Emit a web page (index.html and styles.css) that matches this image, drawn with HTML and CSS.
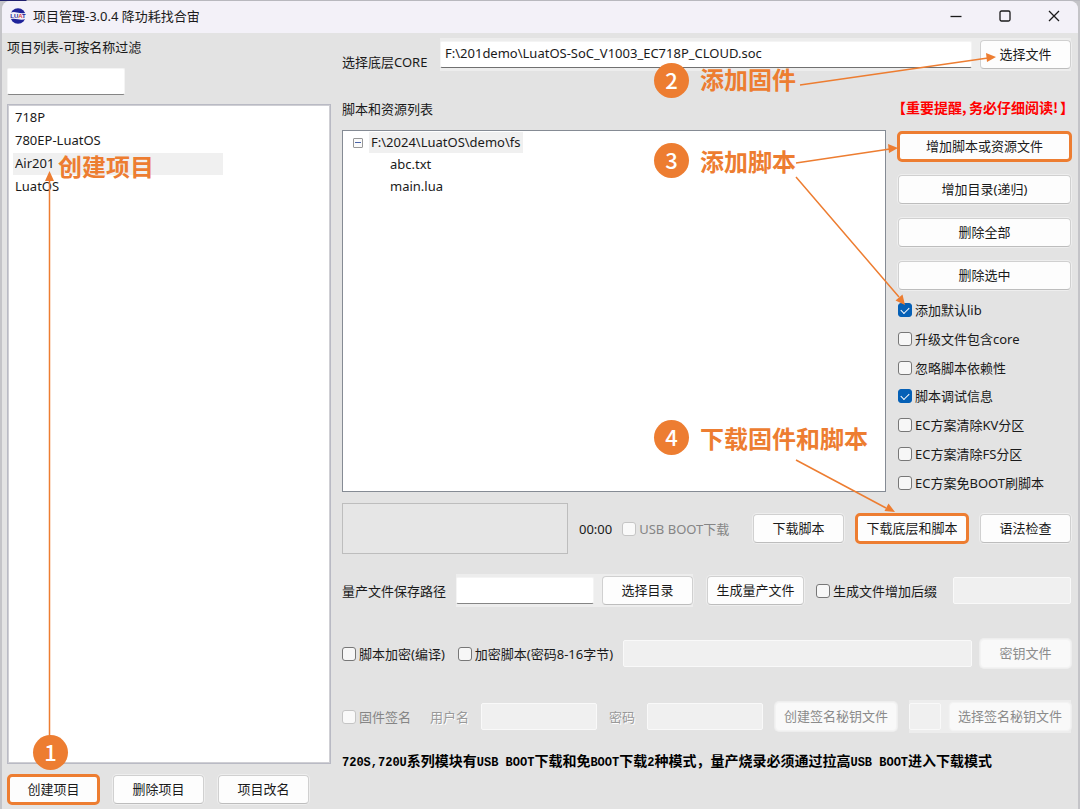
FILE: index.html
```html
<!DOCTYPE html>
<html lang="zh-CN">
<head>
<meta charset="utf-8">
<title>项目管理-3.0.4 降功耗找合宙</title>
<link rel="stylesheet" href="styles.css">
</head>
<body>
<div class="window">
  <header class="titlebar">
    <svg class="logo" viewBox="0 0 16 16" aria-hidden="true">
      <circle cx="8" cy="8" r="7.7" fill="#20249a"/>
      <path d="M0 5 Q3 3.5 7 4.5 T16 5 V11 Q12 12.2 8 11.3 T0 11Z" fill="#f2f0f7"/>
      <text x="8" y="10.2" text-anchor="middle" class="logo-text">LU<tspan fill="#e04040">A</tspan>T</text>
    </svg>
    <h1 class="title">项目管理-3.0.4 降功耗找合宙</h1>
    <div class="controls">
      <button class="control" aria-label="最小化"><svg viewBox="0 0 12 12"><path d="M0.500 6.500H11.500"/></svg></button>
      <button class="control" aria-label="最大化"><svg viewBox="0 0 12 12"><rect x="1" y="1" width="10" height="10" rx="1.500"/></svg></button>
      <button class="control" aria-label="关闭"><svg viewBox="0 0 12 12"><path d="M1 1L11 11M11 1L1 11"/></svg></button>
    </div>
  </header>

  <main class="content">
    <section class="projects">
      <label class="filter-label" for="filter">项目列表-可按名称过滤</label>
      <input class="field filter" id="filter" type="text">
      <ul class="project-list">
        <li class="project">718P</li>
        <li class="project">780EP-LuatOS</li>
        <li class="project selected">Air201</li>
        <li class="project">LuatOS</li>
      </ul>
      <div class="project-actions">
        <button class="btn marked">创建项目</button>
        <button class="btn">删除项目</button>
        <button class="btn">项目改名</button>
      </div>
    </section>

    <section class="details">
      <div class="row core-row">
        <label class="core-label" for="core">选择底层CORE</label>
        <div class="plate grow">
          <input class="field grow" id="core" type="text" value="F:\201demo\LuatOS-SoC_V1003_EC718P_CLOUD.soc">
          <button class="btn">选择文件</button>
        </div>
      </div>

      <div class="list-heading">
        <span>脚本和资源列表</span>
        <strong class="warning">【重要提醒<span class="half">,</span>务必仔细阅读<span class="half">!</span>】</strong>
      </div>

      <div class="resources">
        <div class="tree">
          <div class="tree-root"><button class="toggle" aria-label="折叠"></button><span class="tree-name">F:\2024\LuatOS\demo\fs</span></div>
          <ul class="tree-files">
            <li>abc.txt</li>
            <li>main.lua</li>
          </ul>
        </div>
        <div class="side">
          <div class="side-buttons">
            <button class="btn wide marked">增加脚本或资源文件</button>
            <button class="btn wide">增加目录(递归)</button>
            <button class="btn wide">删除全部</button>
            <button class="btn wide">删除选中</button>
          </div>
          <div class="checks">
            <label class="check"><input type="checkbox" checked>添加默认lib</label>
            <label class="check"><input type="checkbox">升级文件包含core</label>
            <label class="check"><input type="checkbox">忽略脚本依赖性</label>
            <label class="check"><input type="checkbox" checked>脚本调试信息</label>
            <label class="check"><input type="checkbox">EC方案清除KV分区</label>
            <label class="check"><input type="checkbox">EC方案清除FS分区</label>
            <label class="check"><input type="checkbox">EC方案免BOOT刷脚本</label>
          </div>
        </div>
      </div>

      <div class="row download-row">
        <div class="progress"></div>
        <span class="timer">00:00</span>
        <label class="check off"><input type="checkbox" disabled>USB BOOT下载</label>
        <div class="download-actions">
          <button class="btn">下载脚本</button>
          <button class="btn long marked">下载底层和脚本</button>
          <button class="btn">语法检查</button>
        </div>
      </div>

      <div class="row output-row">
        <label for="output">量产文件保存路径</label>
        <div class="plate output-plate">
          <input class="field output" id="output" type="text">
          <button class="btn">选择目录</button>
        </div>
        <button class="btn medium">生成量产文件</button>
        <label class="check suffix-check"><input type="checkbox">生成文件增加后缀</label>
        <input class="field short end" type="text" aria-label="后缀" disabled>
      </div>

      <div class="row encrypt-row">
        <label class="check"><input type="checkbox">脚本加密(编译)</label>
        <label class="check encrypt-check"><input type="checkbox">加密脚本(密码8-16字节)</label>
        <input class="field grow" type="text" aria-label="加密密码" disabled>
        <button class="btn key-button" disabled>密钥文件</button>
      </div>

      <div class="row sign-row">
        <label class="check off"><input type="checkbox" disabled>固件签名</label>
        <label class="etched user-label" for="user">用户名</label>
        <input class="field short" id="user" type="text" disabled>
        <label class="etched" for="pass">密码</label>
        <input class="field short" id="pass" type="password" disabled>
        <button class="btn sign-button" disabled>创建签名秘钥文件</button>
        <div class="plate end">
          <input class="field tiny" type="text" aria-label="签名秘钥" disabled>
          <button class="btn sign-button" disabled>选择签名秘钥文件</button>
        </div>
      </div>

      <p class="footnote"><span class="mono">720S,720U</span>系列模块有<span class="mono">USB BOOT</span>下载和免<span class="mono">BOOT</span>下载<span class="mono">2</span>种模式，量产烧录必须通过拉高<span class="mono">USB BOOT</span>进入下载模式</p>
    </section>
  </main>

  <div class="guide">
    <svg class="arrows" viewBox="0 0 1080 809" aria-hidden="true">
      <path class="line" d="M49.500 740V180M800 85L988 58M796 163L890 149M796 177L899 297M796 460L886 508"/>
      <path class="head" d="M49.500 171L54 181H45ZM996 57L986 53L987 62ZM898 148L888 144L889 153ZM905 305L895.500 300.500L902.500 294.500ZM895 512L884.500 511L888.500 503.500Z"/>
    </svg>
    <span class="step step-1">1</span>
    <span class="step step-2">2</span>
    <span class="step step-3">3</span>
    <span class="step step-4">4</span>
    <span class="note note-1">创建项目</span>
    <span class="note note-2">添加固件</span>
    <span class="note note-3">添加脚本</span>
    <span class="note note-4">下载固件和脚本</span>
  </div>
</div>
</body>
</html>
```
FILE: styles.css
```css
* { box-sizing: border-box; }

body {
  margin: 0;
  padding: 1px 2px 0;
  background: linear-gradient(90deg, #20206c 26px, #b8b8be 27px) top / 100% 1px no-repeat #c4c4c8;
  color: #1a1a1a;
  font: 13px/18px "Noto Sans", "Noto Sans CJK SC", sans-serif;
}

button, input { font: inherit; color: inherit; }
ul, p, h1 { margin: 0; padding: 0; }
ul { list-style: none; }

.window {
  display: flex;
  flex-direction: column;
  min-height: calc(100vh - 1px);
  background: #e3e3e3;
  border-radius: 8px 8px 0 0;
}

.titlebar {
  display: flex;
  align-items: center;
  height: 32px;
  padding: 0 0 2px 8px;
  background: #f3f1f8;
  border-radius: 8px 8px 0 0;
}
.logo { width: 16px; height: 16px; margin-right: 7px; }
.logo-text { font: bold 6px "Liberation Sans", sans-serif; fill: #20249a; }
.title { font-size: 13px; font-weight: 400; }
.controls { display: flex; margin-left: auto; }
.control {
  display: flex;
  align-items: center;
  justify-content: center;
  width: 49px;
  height: 30px;
  padding: 0;
  border: 0;
  background: none;
}
.control svg { width: 12px; height: 12px; fill: none; stroke: #1a1a1a; stroke-width: 1.3; }

.content {
  display: flex;
  flex: 1;
  gap: 11px;
  padding: 5px 7px 0 5px;
}

.projects { display: flex; flex-direction: column; flex: 0 0 324px; }
.filter-label { margin-bottom: 12px; }
.filter { width: 118px; }
.project-list {
  flex: 1;
  margin-top: 9px;
  padding: 2px 5px;
  background: #fff;
  border: 1px solid #b9bac4;
  outline: 1px solid #cfcfd4;
  outline-offset: -2px;
}
.project { width: 210px; padding: 1px 2px 3px; height: 22px; margin-bottom: 1px; }
.selected { background: #f0f0f0; }
.project-actions { display: flex; gap: 14px; padding: 11px 0 5px 1px; }

.btn {
  flex: none;
  width: 91px;
  height: 29px;
  padding: 0 0 2px;
  background: #fdfdfd;
  border: 1px solid #d0d0d0;
  border-bottom-color: #bdbdbd;
  border-radius: 4px;
  box-shadow: 0 0 0 1px #eee;
  white-space: nowrap;
}
.btn:disabled { color: #8b8b8b; background: #f9f9f9; border-color: #f3f3f3; }
.btn.marked { outline: 3px solid #ed7d31; outline-offset: -2px; }
.btn.wide { width: 173px; }
.btn.long { width: 112px; }
.btn.medium { width: 97px; }
.btn.sign-button { width: 122px; }

.field {
  min-width: 0;
  height: 27px;
  padding: 0 4px 3px;
  background: #fff;
  border: 1px solid #f4f4f4;
  border-bottom-color: #858585;
  border-radius: 2px;
}
.field:disabled { background: #f0f0f0; border-color: #f9f9f9; }
.short { width: 118px; }
.tiny { width: 32px; }
.grow { flex: 1; }
.end { margin-left: auto; }

.plate { display: flex; align-items: center; gap: 8px; height: 33px; background: #ededed; }

.details { display: flex; flex-direction: column; flex: 1; min-width: 0; }
.row { display: flex; align-items: center; min-height: 33px; white-space: nowrap; }
.core-label { width: 98px; padding-top: 14px; }
.core-row .field { border-bottom-color: #707070; }

.list-heading { display: flex; justify-content: space-between; padding: 29px 0 12px; }
.warning {
  display: flex;
  margin: -2px -3px 0 0;
  color: #f00;
  font: bold 14px/18px "Noto Sans CJK SC", sans-serif;
}
.half { width: 7px; }

.resources { display: flex; flex: 1; gap: 12px; }
.tree { flex: 1; padding: 1px 10px; background: #fff; border: 1px solid #858b94; }
.tree-root { display: flex; align-items: center; gap: 6px; }
.toggle {
  width: 10px;
  height: 10px;
  padding: 0;
  border: 1px solid #979797;
  border-radius: 1px;
  background: linear-gradient(#4a64a8, #4a64a8) center / 6px 1px no-repeat #fafafa;
}
.tree-name { padding: 1px 2px 2px; background: #f0f0f0; }
.tree-files { padding-left: 37px; line-height: 22px; }
.side { display: flex; flex-direction: column; padding-top: 2px; }
.side-buttons { display: flex; flex-direction: column; gap: 14px; }

.checks { display: flex; flex-direction: column; justify-content: space-between; flex: 1; margin-top: 11px; }
.check { display: flex; align-items: center; gap: 3px; white-space: nowrap; }
.check input {
  appearance: none;
  display: grid;
  place-items: center;
  flex: none;
  width: 14px;
  height: 14px;
  margin: 0;
  background: #f7f7f7;
  border: 1px solid #777;
  border-radius: 3px;
}
.check input:checked { background: #0560b6; border-color: #0560b6; }
.check input:checked::after {
  content: "";
  width: 7px;
  height: 4px;
  margin-bottom: 2px;
  border: solid #fff;
  border-width: 0 0 1px 1px;
  transform: rotate(-45deg);
}
.check input:disabled { background: #f9f9f9; border-color: #c5c5c5; }
.off { color: #858585; }

.download-row { margin-top: 11px; }
.progress { width: 226px; height: 51px; background: #e6e6e6; border: 1px solid #bdbdbd; }
.timer { margin: 0 10px 0 11px; }
.download-actions { display: flex; gap: 12px; margin-left: auto; }

.output-row { margin-top: 20px; }
.output-plate { margin: 0 14px 0 10px; }
.output { width: 138px; }
.suffix-check { margin-left: 12px; }

.encrypt-row { margin-top: 30px; }
.encrypt-check { margin: 0 10px 0 13px; }
.key-button { margin-left: 8px; }

.sign-row { gap: 12px; margin-top: 30px; }
.etched { color: #999; text-shadow: 1px 1px 0 #fff; }
.user-label { margin-left: 7px; }

.footnote {
  margin: 17px 0 37px;
  color: #000;
  font: bold 14px/20px "Noto Sans CJK SC", sans-serif;
  white-space: nowrap;
}
.footnote .mono { font: bold 12px/18px "Liberation Mono", monospace; }

.guide {
  position: absolute;
  top: 0;
  left: 0;
  width: 1080px;
  height: 809px;
  pointer-events: none;
}
.arrows { position: absolute; top: 0; left: 0; width: 1080px; height: 809px; }
.line { fill: none; stroke: #ed7d31; stroke-width: 1.5; }
.head { fill: #ed7d31; }
.step {
  position: absolute;
  width: 35px;
  height: 35px;
  border-radius: 50%;
  background: #ed7d31;
  color: #fff;
  font: 500 22px/32px "Noto Sans CJK SC", sans-serif;
  text-align: center;
}
.note {
  position: absolute;
  color: #ed7d31;
  font: bold 24px/32px "Noto Sans CJK SC", sans-serif;
  white-space: nowrap;
}
.step-1 { left: 33px; top: 735px; }
.step-2 { left: 654px; top: 63px; }
.step-3 { left: 654px; top: 143px; }
.step-4 { left: 654px; top: 420px; }
.note-1 { left: 58px; top: 150px; }
.note-2 { left: 700px; top: 63px; }
.note-3 { left: 700px; top: 145px; }
.note-4 { left: 700px; top: 422px; }
```
